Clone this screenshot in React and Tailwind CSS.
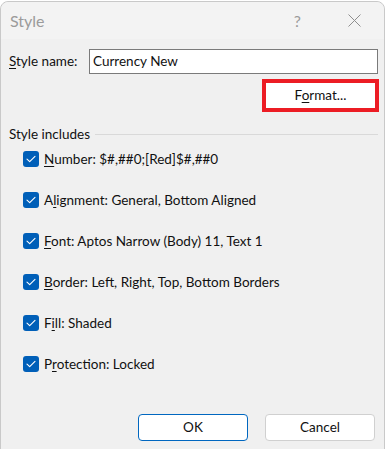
import React from "react";

const font = { fontFamily: 'Lato, "Noto Sans", Arial, sans-serif' };

const CheckBox = () => (
  <span className="flex h-[16px] w-[16px] shrink-0 items-center justify-center rounded-[3px] bg-[#005fb8]">
    <svg width="10" height="8" viewBox="0 0 10 8" fill="none">
      <path d="M1 4.2L3.7 6.7L9 1.3" stroke="white" strokeWidth="1.1" strokeLinecap="round" strokeLinejoin="round" />
    </svg>
  </span>
);

// label with one underlined access key
const Key = ({ before = "", k, after }) => (
  <span>
    {before}
    <span className="underline underline-offset-2 decoration-1">{k}</span>
    {after}
  </span>
);

const items = [
  { before: "", k: "N", after: "umber: $#,##0;[Red]$#,##0" },
  { before: "A", k: "l", after: "ignment: General, Bottom Aligned" },
  { before: "", k: "F", after: "ont: Aptos Narrow (Body) 11, Text 1" },
  { before: "", k: "B", after: "order: Left, Right, Top, Bottom Borders" },
  { before: "F", k: "i", after: "ll: Shaded" },
  { before: "P", k: "r", after: "otection: Locked" },
];

export default function App() {
  return (
    <div className="h-[449px] w-[385px] overflow-hidden bg-white pt-[1px]" style={font}>
      <div className="flex h-[470px] flex-col rounded-[8px] border border-[#c9c9c9] bg-[#f0f0f0] text-[13.5px] text-[#111]">
        {/* title bar */}
        <div className="flex h-[37px] items-center rounded-t-[8px] bg-[#f3f3f3] pl-[9px]">
          <span className="text-[16px] text-[#9b9b9b]">Style</span>
          <span className="ml-auto mr-[47px] text-[16px] text-[#9b9b9b]">?</span>
          <svg className="mr-[23px]" width="13" height="13" viewBox="0 0 13 13">
            <path d="M0.5 0.5L12.5 12.5M12.5 0.5L0.5 12.5" stroke="#8e8e8e" strokeWidth="1" />
          </svg>
        </div>

        {/* body */}
        <div className="flex flex-col pl-[8px] pr-[6px]">
          <div className="mt-[10px] flex items-center">
            <span className="w-[80px]">
              <Key k="S" after="tyle name:" />
            </span>
            <div className="flex h-[25px] flex-1 items-center border border-[#7a7a7a] bg-white pl-[3px]">
              Currency New
            </div>
          </div>

          <div className="mt-[5px] flex justify-end">
            <div className="-mr-[1px] h-[33px] w-[117px] border-[4px] border-[#ec1c24] bg-white">
              <div className="flex h-full items-center justify-center pb-[1px]">
                <Key before="F" k="o" after="rmat..." />
              </div>
            </div>
          </div>

          <div className="mt-[12px] flex h-[20px] items-center">
            <span>Style includes</span>
            <div className="ml-[5px] h-px flex-1 bg-[#d9d9d9]" />
          </div>

          <div className="mt-[5px] flex flex-col gap-[21px] pl-[14px]">
            {items.map((it) => (
              <div key={it.after} className="flex h-[20px] items-center gap-[5px]">
                <CheckBox />
                <Key before={it.before} k={it.k} after={it.after} />
              </div>
            ))}
          </div>

          <div className="mt-[40px] flex justify-end gap-[17px] pr-[3px]">
            <button className="h-[27px] w-[110px] rounded-[4px] border border-[#0067c0] bg-white">OK</button>
            <button className="h-[27px] w-[110px] rounded-[4px] border border-[#d0d0d0] bg-white">Cancel</button>
          </div>
        </div>
      </div>
    </div>
  );
}
